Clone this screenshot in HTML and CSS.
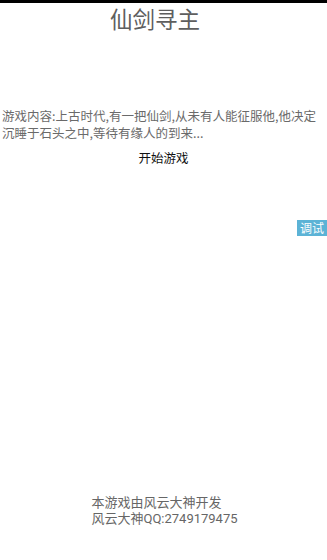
FILE: index.html
```html
<!DOCTYPE html>
<html lang="zh-CN">
<head>
<meta charset="utf-8">
<title>仙剑寻主</title>
<link rel="stylesheet" href="styles.css">
</head>
<body>
<div class="page">
  <h1 class="title">仙剑寻主</h1>
  <p class="desc">游戏内容:上古时代,有一把仙剑,从未有人能征服他,他决定沉睡于石头之中,等待有缘人的到来...</p>
  <div class="start">开始游戏</div>
  <div class="footer">
    <div class="footer-inner">
      <div>本游戏由风云大神开发</div>
      <div>风云大神QQ:2749179475</div>
    </div>
  </div>
</div>
<div class="debug">调试</div>
</body>
</html>
```
FILE: styles.css
```css
html, body {
  margin: 0;
  padding: 0;
  background: #fff;
}
body {
  font-family: "Noto Sans CJK SC", "Noto Sans", sans-serif;
  border-top: 3px solid #000;
  box-sizing: border-box;
  height: 560px;
  overflow: hidden;
}
.page {
  display: flex;
  flex-direction: column;
  height: 557px;
}
.title {
  margin: 0;
  padding: 1px 17px 0 0;
  font-size: 22.5px;
  line-height: 28px;
  font-weight: 400;
  color: #5e5e5e;
  text-align: center;
}
.desc {
  margin: 76px 0 0 0;
  padding: 0 2px;
  font-size: 12.5px;
  line-height: 16.5px;
  color: #6a6a6a;
}
.start {
  margin-top: 9px;
  font-size: 12.5px;
  line-height: 16px;
  color: #111;
  text-align: center;
}
.footer {
  margin-top: auto;
  margin-bottom: 33px;
  display: flex;
  justify-content: center;
}
.footer-inner {
  font-family: "Roboto", "Noto Sans CJK SC", sans-serif;
  font-size: 13px;
  line-height: 16px;
  color: #666;
  padding-left: 2px;
}
.debug {
  position: absolute;
  right: 0;
  top: 220px;
  width: 30px;
  height: 16px;
  background: #5cb3d6;
  color: #fff;
  font-size: 12px;
  line-height: 16px;
  text-align: center;
}
```
